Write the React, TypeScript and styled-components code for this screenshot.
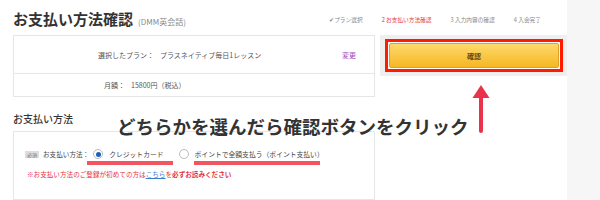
import React from "react";
import styled, { createGlobalStyle } from "styled-components";

const Global = createGlobalStyle`
  html, body { margin: 0; padding: 0; background: #fff; }
  body { width: 600px; height: 200px; overflow: hidden; font-family: "Noto Sans CJK JP", "Noto Sans", sans-serif; color: #333; }
`;

const Page = styled.div`
  position: relative;
  display: flex;
  width: 600px;
  height: 200px;
  overflow: hidden;
`;

const Main = styled.div`
  width: 567px;
  padding-left: 13px;
  box-sizing: border-box;
  display: flex;
  flex-direction: column;
`;

const Strip = styled.div`
  flex: 1;
  background: #f6f6f6;
`;

const Header = styled.div`
  display: flex;
  align-items: flex-start;
  height: 43px;
`;

const Title = styled.h1`
  margin: 9px 0 0;
  font-size: 15px;
  line-height: 20px;
  font-weight: 700;
  color: #333;
  display: flex;
  align-items: baseline;
`;

const Sub = styled.span`
  font-size: 8px;
  font-weight: 400;
  color: #888;
  margin-left: 5px;
`;

const Steps = styled.ol`
  list-style: none;
  margin: 16px 26px 0 auto;
  padding: 0;
  display: flex;
  gap: 19px;
`;

const Step = styled.li<{ $active?: boolean }>`
  font-size: 5.7px;
  line-height: 8px;
  color: ${(p) => (p.$active ? "#e8383d" : "#888")};
`;

const Content = styled.div`
  display: flex;
  gap: 5px;
  align-items: flex-start;
`;

const PlanBox = styled.div`
  width: 362px;
  box-sizing: border-box;
  border: 1px solid #e6e6e6;
`;

const PlanRow = styled.div<{ $h: number; $pl: number }>`
  display: flex;
  align-items: center;
  height: ${(p) => p.$h}px;
  padding-left: ${(p) => p.$pl}px;
  padding-right: 18px;
  font-size: 7px;
  color: #555;
`;

const Divider = styled.div`
  height: 1px;
  background: #e6e6e6;
`;

const Label = styled.span`
  margin-right: 6px;
`;

const Value = styled.span`
  color: #555;
`;

const Change = styled.a`
  margin-left: auto;
  color: #a04bc0;
  font-size: 7px;
  text-decoration: none;
`;

const ActionBox = styled.div`
  width: 187px;
  height: 41px;
  box-sizing: border-box;
  background: #efefef;
  padding: 4px 4px 4px 5px;
`;

const RedFrame = styled.div`
  height: 100%;
  box-sizing: border-box;
  border: 3px solid #ff1a00;
  padding: 1px;
  background: #fff;
`;

const ConfirmButton = styled.button`
  width: 100%;
  height: 100%;
  box-sizing: border-box;
  border: 1px solid #dca422;
  border-radius: 2px;
  background: linear-gradient(#fdd96c, #f6b723);
  font-family: inherit;
  font-size: 7px;
  font-weight: 700;
  color: #6b4b12;
  padding: 0;
  display: flex;
  align-items: center;
  justify-content: center;
`;

const SectionHeading = styled.h2`
  margin: 15px 0 0;
  font-size: 10px;
  line-height: 14px;
  font-weight: 500;
  color: #333;
`;

const PaymentBox = styled.div`
  margin-top: 5px;
  width: 362px;
  height: 80px;
  box-sizing: border-box;
  border: 1px solid #e6e6e6;
  padding: 16px 0 0 11px;
`;

const PaymentRow = styled.div`
  display: flex;
  align-items: center;
  height: 12px;
`;

const Badge = styled.span`
  font-size: 5px;
  line-height: 7px;
  background: #ddd;
  color: #777;
  padding: 0 2px;
  margin-right: 4px;
`;

const RowLabel = styled.span`
  font-size: 6.6px;
  color: #444;
  margin-right: 4px;
`;

const Radio = styled.span<{ $checked?: boolean }>`
  width: 10px;
  height: 10px;
  box-sizing: border-box;
  border-radius: 50%;
  border: 1px solid #bbb;
  background: #fff;
  display: inline-flex;
  align-items: center;
  justify-content: center;
  margin-right: 6px;
  &::after {
    content: "";
    width: 5px;
    height: 5px;
    border-radius: 50%;
    background: ${(p) => (p.$checked ? "#1a5fb8" : "transparent")};
  }
`;

const OptionText = styled.span<{ $ulLeft: number; $ulRight: number; $mr?: number }>`
  position: relative;
  font-size: 6.8px;
  line-height: 12px;
  color: #444;
  margin-right: ${(p) => p.$mr ?? 0}px;
  &::after {
    content: "";
    position: absolute;
    left: ${(p) => p.$ulLeft}px;
    right: ${(p) => p.$ulRight}px;
    bottom: -5px;
    height: 4px;
    background: #f25560;
  }
`;

const Note = styled.p`
  margin: 9px 0 0 2px;
  font-size: 6.6px;
  line-height: 10px;
  color: #e8333a;
`;

const NoteLink = styled.a`
  color: #3b7fd4;
  text-decoration: underline;
`;

const Strong = styled.strong`
  font-weight: 700;
`;

const Annotation = styled.div`
  position: absolute;
  left: 117px;
  top: 115px;
  font-size: 18.5px;
  line-height: 22px;
  font-weight: 700;
  color: #333;
  white-space: nowrap;
`;

const Arrow = styled.svg`
  position: absolute;
  left: 471px;
  top: 84px;
`;

export default function App() {
  return (
    <>
      <Global />
      <Page>
        <Main>
          <Header>
            <Title>
              お支払い方法確認<Sub>(DMM英会話)</Sub>
            </Title>
            <Steps>
              <Step>✔プラン選択</Step>
              <Step $active>2 お支払い方法確認</Step>
              <Step>3 入力内容の確認</Step>
              <Step>4 入会完了</Step>
            </Steps>
          </Header>
          <Content>
            <PlanBox>
              <PlanRow $h={37} $pl={84}>
                <Label>選択したプラン：</Label>
                <Value>プラスネイティブ毎日1レッスン</Value>
                <Change>変更</Change>
              </PlanRow>
              <Divider />
              <PlanRow $h={22} $pl={90}>
                <Label>月額：</Label>
                <Value>15800円（税込）</Value>
              </PlanRow>
            </PlanBox>
            <ActionBox>
              <RedFrame>
                <ConfirmButton>確認</ConfirmButton>
              </RedFrame>
            </ActionBox>
          </Content>
          <SectionHeading>お支払い方法</SectionHeading>
          <PaymentBox>
            <PaymentRow>
              <Badge>必須</Badge>
              <RowLabel>お支払い方法：</RowLabel>
              <Radio $checked />
              <OptionText $ulLeft={-22} $ulRight={-9} $mr={15}>
                クレジットカード
              </OptionText>
              <Radio />
              <OptionText $ulLeft={-1} $ulRight={4}>
                ポイントで全額支払う（ポイント支払い）
              </OptionText>
            </PaymentRow>
            <Note>
              ※お支払い方法のご登録が初めての方は<NoteLink>こちら</NoteLink>を
              <Strong>必ずお読みください</Strong>
            </Note>
          </PaymentBox>
        </Main>
        <Strip />
        <Annotation>どちらかを選んだら確認ボタンをクリック</Annotation>
        <Arrow width="20" height="50" viewBox="0 0 20 50">
          <polygon points="10,1 18.5,14 1.5,14" fill="#e8334a" />
          <rect x="8" y="12" width="4" height="37" rx="2" fill="#e8334a" />
        </Arrow>
      </Page>
    </>
  );
}
